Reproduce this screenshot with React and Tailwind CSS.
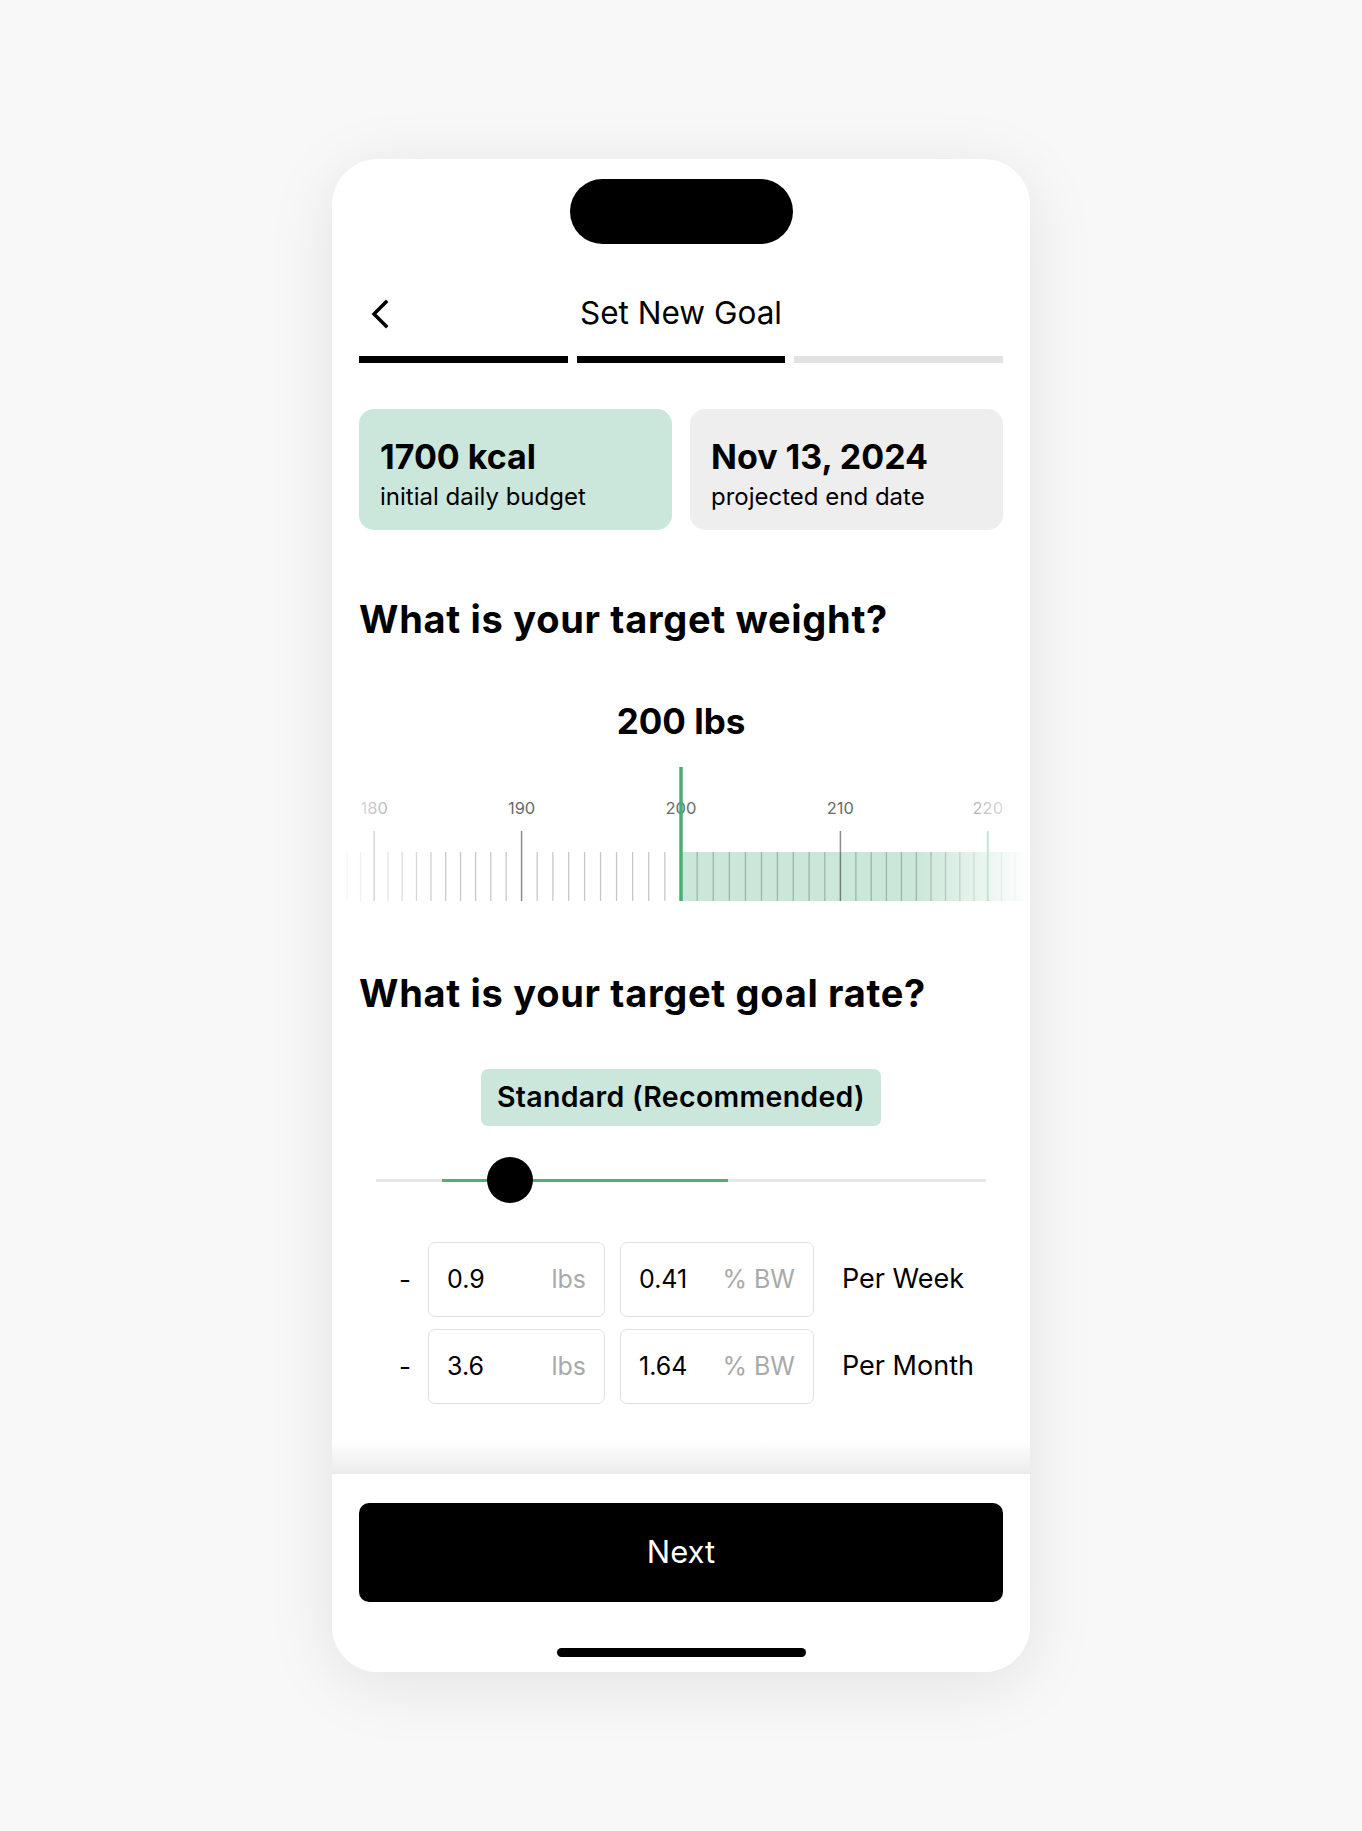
import React from "react";

// wheel-style ruler: ticks get tighter towards the edges
const CENTER = 349;
const RADIUS = 587;
const STEP = 0.0275;
const SELECTED = 200;

const tickX = (value) => CENTER + RADIUS * Math.sin(STEP * (value - SELECTED));

const WeightRuler = () => {
  const ticks = [];
  for (let v = 178; v <= 222; v++) ticks.push(v);

  return (
    <svg width="698" height="146" viewBox="0 0 698 146" className="block">
      <defs>
        <linearGradient id="fadeLeft" x1="0" x2="1" y1="0" y2="0">
          <stop offset="0" stopColor="#ffffff" stopOpacity="1" />
          <stop offset="1" stopColor="#ffffff" stopOpacity="0" />
        </linearGradient>
        <linearGradient id="fadeRight" x1="0" x2="1" y1="0" y2="0">
          <stop offset="0" stopColor="#ffffff" stopOpacity="0" />
          <stop offset="1" stopColor="#ffffff" stopOpacity="1" />
        </linearGradient>
      </defs>

      <rect x={CENTER} y="93" width={698 - CENTER} height="49" fill="#cbe7d9" />

      {ticks.map((v) => {
        const x = tickX(v);
        const major = v % 10 === 0;
        if (v === 220) {
          return <line key={v} x1={x} x2={x} y1="72" y2="142" stroke="#5dbd88" strokeWidth="2" />;
        }
        return (
          <line
            key={v}
            x1={x}
            x2={x}
            y1={major ? 72 : 93}
            y2="142"
            stroke={major ? "rgba(0,0,0,0.45)" : "rgba(0,0,0,0.22)"}
            strokeWidth={major ? 1.5 : 1.3}
          />
        );
      })}

      {[180, 190, 200, 210, 220].map((v) => (
        <text
          key={v}
          x={tickX(v)}
          y="55"
          textAnchor="middle"
          fontSize="16.5"
          fontFamily="Inter, sans-serif"
          fill="#6a6a6a"
        >
          {v}
        </text>
      ))}

      <rect x="0" y="0" width="115" height="146" fill="url(#fadeLeft)" />
      <rect x="585" y="0" width="113" height="146" fill="url(#fadeRight)" />

      <rect x={CENTER - 1.75} y="8" width="3.5" height="134" fill="#45b075" />
    </svg>
  );
};

const RateRow = ({ lbs, pct, label }) => (
  <div className="flex items-center pl-[38px]">
    <span className="w-[16px] text-center text-[26px] text-black">-</span>
    <div className="ml-[15px] w-[177px] h-[75px] rounded-[7px] border-[1.5px] border-[#e0e0e0] px-[18px] flex items-center justify-between text-[25px]">
      <span className="text-black">{lbs}</span>
      <span className="text-[#a9a9a9]">lbs</span>
    </div>
    <div className="ml-[15px] w-[194px] h-[75px] rounded-[7px] border-[1.5px] border-[#e0e0e0] px-[18px] flex items-center justify-between text-[25px]">
      <span className="text-black">{pct}</span>
      <span className="text-[#a9a9a9]">% BW</span>
    </div>
    <span className="ml-[28px] text-[27px] text-black">{label}</span>
  </div>
);

export default function App() {
  return (
    <div className="min-h-[1831px] bg-[#f8f8f8] pt-[159px] font-[family-name:Inter,sans-serif] text-black">
      <div className="mx-auto w-[698px] h-[1513px] rounded-[46px] bg-white shadow-[0_12px_70px_rgba(0,0,0,0.09)] overflow-hidden flex flex-col">
        {/* dynamic island */}
        <div className="mx-auto mt-[20px] w-[223px] h-[65px] rounded-full bg-black" />

        <div className="flex-1 px-[27px] flex flex-col">
          {/* header */}
          <div className="mt-[45px] h-[40px] grid grid-cols-[60px_1fr_60px] items-center">
            <svg width="20" height="30" viewBox="0 0 20 30" className="ml-[12px] mt-[2px]">
              <path d="M15 3 L3 15 L15 27" fill="none" stroke="black" strokeWidth="3.5" strokeLinecap="square" />
            </svg>
            <h1 className="text-center text-[31.5px] font-normal">Set New Goal</h1>
            <div />
          </div>

          {/* step progress */}
          <div className="mt-[27px] flex gap-[9px]">
            <div className="flex-1 h-[7px] bg-black" />
            <div className="flex-1 h-[7px] bg-black" />
            <div className="flex-1 h-[7px] bg-[#e2e2e2]" />
          </div>

          {/* summary cards */}
          <div className="mt-[46px] grid grid-cols-2 gap-[18px]">
            <div className="h-[121px] rounded-[15px] bg-[#cbe6db] pl-[21px] pt-[28px] flex flex-col">
              <div className="text-[34px] font-bold leading-[40px]">1700 kcal</div>
              <div className="mt-[4px] text-[24px] leading-[32px]">initial daily budget</div>
            </div>
            <div className="h-[121px] rounded-[15px] bg-[#eeeeee] pl-[21px] pt-[28px] flex flex-col">
              <div className="text-[34px] font-bold leading-[40px]">Nov 13, 2024</div>
              <div className="mt-[4px] text-[24px] leading-[32px]">projected end date</div>
            </div>
          </div>

          {/* target weight */}
          <h2 className="mt-[66px] text-[38px] font-bold leading-[46px] tracking-[0.7px]">What is your target weight?</h2>
          <div className="mt-[58px] text-center text-[35px] font-bold leading-[43px]">200 lbs</div>
          <div className="-mx-[27px] mt-[16px]">
            <WeightRuler />
          </div>

          {/* goal rate */}
          <h2 className="mt-[65px] text-[38px] font-bold leading-[46px] tracking-[0.7px]">What is your target goal rate?</h2>
          <div className="mt-[53px] mx-auto w-[400px] h-[57px] rounded-[7px] bg-[#cbe6db] flex items-center justify-center text-[28.5px] font-semibold tracking-[0.3px]">
            Standard (Recommended)
          </div>

          <div className="mt-[31px] mx-[17px] h-[46px] relative flex items-center">
            <div className="w-full h-[3px] bg-[#e6e6e6] relative">
              <div className="absolute left-[66px] w-[286px] top-0 h-[3px] bg-[#4cb27b]" />
            </div>
            <div className="absolute left-[111px] top-0 w-[46px] h-[46px] rounded-full bg-black" />
          </div>

          <div className="mt-[39px] flex flex-col gap-[12px]">
            <RateRow lbs="0.9" pct="0.41" label="Per Week" />
            <RateRow lbs="3.6" pct="1.64" label="Per Month" />
          </div>
        </div>

        {/* footer */}
        <div className="h-[34px] bg-gradient-to-b from-white to-[#ebebeb]" />
        <div className="h-[198px] bg-white px-[27px] pt-[29px] flex flex-col items-center">
          <button className="w-full h-[99px] rounded-[10px] bg-black text-white text-[31px] font-normal">Next</button>
          <div className="mt-[46px] w-[249px] h-[9px] rounded-full bg-black" />
        </div>
      </div>
    </div>
  );
}
